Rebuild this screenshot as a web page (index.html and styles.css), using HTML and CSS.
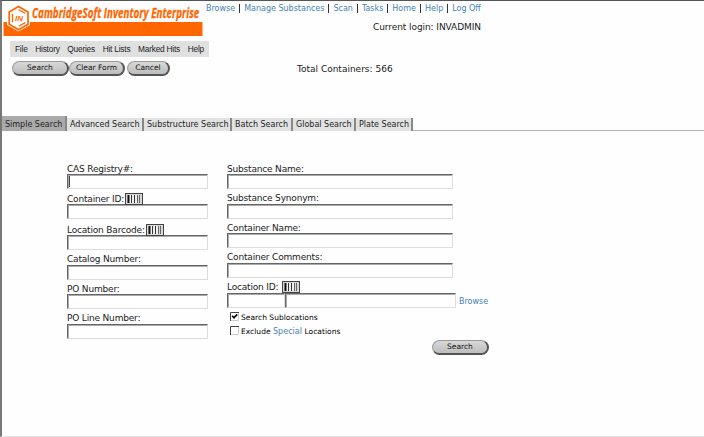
FILE: index.html
```html
<!DOCTYPE html>
<html lang="en">
<head>
<meta charset="utf-8">
<title>CambridgeSoft Inventory Enterprise</title>
<link rel="stylesheet" href="styles.css">
</head>
<body>
<svg class="defs" width="0" height="0" aria-hidden="true">
  <symbol id="barcode" viewBox="0 0 18 12">
    <rect x=".5" y=".5" width="17" height="11" fill="#d8d8d8" stroke="#444"/>
    <path d="M5.2 2v8M8 2v8M11 2v8" stroke="#fff" stroke-width="1.2"/>
    <path d="M3.5 2v8" stroke="#111" stroke-width="2"/>
    <path d="M6.5 2v8M9.5 2v8" stroke="#333" stroke-width="1"/>
    <path d="M12.5 2v8M14.5 2v8" stroke="#666" stroke-width="1"/>
  </symbol>
</svg>
<div class="page">
  <header class="top">
    <div class="brand">
      <svg class="logo" width="201" height="37" viewBox="0 0 201 37">
        <rect x="1.5" y="21" width="199" height="14" fill="#ff6600"/>
        <path d="M16.5 3.5L28 10v14L16.5 30.5 5 24V10Z" fill="#fff"/>
        <path d="M16.5 5.5L26 11v12.3L16.5 28.7 7.2 23.3V11Z" fill="#fff" stroke="#ff6600" stroke-width="1.7"/>
        <path d="M10.5 12.7v8.5M16.7 8.7l6.5 3.6M16.7 25.3l6.5-3.7" fill="none" stroke="#ff6600" stroke-width="1.3"/>
        <text class="mark" x="13" y="19.5">IN</text>
        <text class="title" transform="translate(30 16.8) scale(.7 1)" textLength="239">CambridgeSoft Inventory Enterprise</text>
      </svg>
      <nav class="menu"><span>File</span><span>History</span><span>Queries</span><span>Hit Lists</span><span>Marked Hits</span><span>Help</span></nav>
      <div class="actions"><button class="pill w56">Search</button><button class="pill w55">Clear Form</button><button class="pill w43">Cancel</button></div>
    </div>
    <div class="info">
      <nav class="links"><a>Browse</a><i></i><a>Manage Substances</a><i></i><a>Scan</a><i></i><a>Tasks</a><i></i><a>Home</a><i></i><a>Help</a><i></i><a>Log Off</a></nav>
      <div class="login">Current login: INVADMIN</div>
      <div class="total">Total Containers: 566</div>
    </div>
  </header>
  <nav class="tabs">
    <span class="tab active t1">Simple Search</span><span class="tab t2">Advanced Search</span><span class="tab t3">Substructure Search</span><span class="tab t4">Batch Search</span><span class="tab t5">Global Search</span><span class="tab t6">Plate Search</span>
  </nav>
  <main class="form">
    <div class="col left">
      <div class="field"><label>CAS Registry#:</label><div class="box"><b class="caret"></b></div></div>
      <div class="field"><label>Container ID:<svg class="bar"><use href="#barcode"/></svg></label><div class="box"></div></div>
      <div class="field"><label>Location Barcode:<svg class="bar"><use href="#barcode"/></svg></label><div class="box"></div></div>
      <div class="field"><label>Catalog Number:</label><div class="box"></div></div>
      <div class="field"><label>PO Number:</label><div class="box"></div></div>
      <div class="field"><label>PO Line Number:</label><div class="box"></div></div>
    </div>
    <div class="col right">
      <div class="field"><label>Substance Name:</label><div class="box"></div></div>
      <div class="field"><label>Substance Synonym:</label><div class="box"></div></div>
      <div class="field"><label>Container Name:</label><div class="box"></div></div>
      <div class="field"><label>Container Comments:</label><div class="box"></div></div>
      <div class="field"><label>Location ID:<svg class="bar gap"><use href="#barcode"/></svg></label>
        <div class="location"><div class="box short"></div><div class="box long"></div><a>Browse</a></div></div>
      <div class="check"><svg width="9" height="9" viewBox="0 0 9 9"><path d="M9 .5H.5V9" fill="none" stroke="#444"/><path d="M1 8.5h7.5V1" fill="none" stroke="#ccc"/><path d="M2.2 3.8L4 5.8 7.2 2.4" fill="none" stroke="#000" stroke-width="1.7"/></svg><span>Search Sublocations</span></div>
      <div class="check"><svg width="9" height="9" viewBox="0 0 9 9"><path d="M9 .5H.5V9" fill="none" stroke="#444"/><path d="M1 8.5h7.5V1" fill="none" stroke="#ccc"/></svg><span>Exclude <a>Special</a> Locations</span></div>
      <button class="pill w56 submit">Search</button>
    </div>
  </main>
</div>
</body>
</html>
```

FILE: styles.css
```css
* { box-sizing: border-box; }
body { margin: 0; background: #fefefe; color: #222; font: 9px/12px "DejaVu Sans", sans-serif; overflow: hidden; }
.defs { position: absolute; }
.page { width: 704px; height: 437px; border-top: 1px solid #555; border-left: 2px solid #777; border-bottom: 1px solid #e5e5e5; }
a { color: #4682b4; }
.top { display: flex; height: 115px; }
.brand { width: 204px; flex: none; }
.logo { display: block; overflow: visible; }
.title { font: italic bold 14px "Open Sans", sans-serif; fill: #ff6600; stroke: #ff6600; stroke-width: .3px; }
.mark { font: italic bold 8px "Liberation Sans", sans-serif; fill: #ff6600; }
.menu { display: flex; width: 199px; height: 16px; margin: 3px 0 0 8px; padding: 0 5px; justify-content: space-between; background: #e0e0e0; font: 8.3px/16px "Liberation Sans", sans-serif; letter-spacing: -.2px; white-space: nowrap; }
.actions { display: flex; margin: 4px 0 0 10px; }
.actions .w43 { margin-left: 2px; }
.pill { display: block; height: 15px; padding: 0 0 1px; border: 1px solid #999; border-right: 2px solid #555; border-bottom: 2px solid #555; border-radius: 8px; background: linear-gradient(#d8d8d8, #bdbdbd); color: #111; font: 7.5px/11px "DejaVu Sans", sans-serif; letter-spacing: 0; white-space: nowrap; }
.w56 { width: 57px; }
.w55 { width: 56px; }
.w43 { width: 43px; }
.info { width: 276px; }
.links { display: flex; justify-content: space-between; align-items: center; height: 14px; padding: 1px 1px 0 0; font-size: 8px; white-space: nowrap; }
.links i { width: 1px; height: 9px; background: #333; }
.login { margin: 6px 1px 0 0; text-align: right; letter-spacing: -.07px; }
.total { margin: 30px 0 0 91px; }
.tabs { display: flex; align-items: flex-end; height: 15px; border-bottom: 1px solid #b5b5b5; }
.tab { height: 13px; margin-bottom: -1px; padding-left: 3px; border-right: 2px solid #888; background: #e2e2e2; font-size: 8px; line-height: 14px; white-space: nowrap; }
.active { height: 15px; background: #aaa; line-height: 17px; }
.t1 { width: 65px; }
.t2 { width: 77px; }
.t3 { width: 88px; }
.t4 { width: 61px; }
.t5 { width: 63px; }
.t6 { width: 57px; }
.form { display: flex; gap: 19px; padding: 32px 0 0 65px; }
.left { width: 141px; }
.right { width: 262px; }
.field { height: 29.5px; white-space: nowrap; letter-spacing: -.18px; }
.left .field:nth-child(2) { height: 31px; }
.left .field:nth-child(1) { height: 30.4px; }
label { display: flex; align-items: center; height: 11px; }
.bar { width: 18px; height: 12px; flex: none; margin-left: 1px; }
.gap { margin-left: 4px; }
.box { height: 15px; border: 1px solid #ddd; border-top-color: #666; border-left-color: #666; background: #fff; box-shadow: inset 1px 1px #aaa; }
.right .box { width: 226px; }
.caret { display: block; width: 1px; height: 11px; margin: 1px 0 0 1px; background: #444; }
.location { display: flex; align-items: center; font-size: 8px; letter-spacing: 0; }
.right .short { width: 58px; }
.right .long { width: 171px; margin-right: 3px; }
.location a { padding-top: 4px; }
.check { display: flex; align-items: center; gap: 2px; height: 14px; margin-top: -1px; margin-bottom: 1px; padding-left: 3px; font-size: 7.5px; white-space: nowrap; color: #000; }
.check + .check { margin-top: -1px; }
.check span { padding-top: 3px; letter-spacing: .03px; }
.check a { font-size: 8px; }
.submit { margin: 2px 0 0 205px; }
```
